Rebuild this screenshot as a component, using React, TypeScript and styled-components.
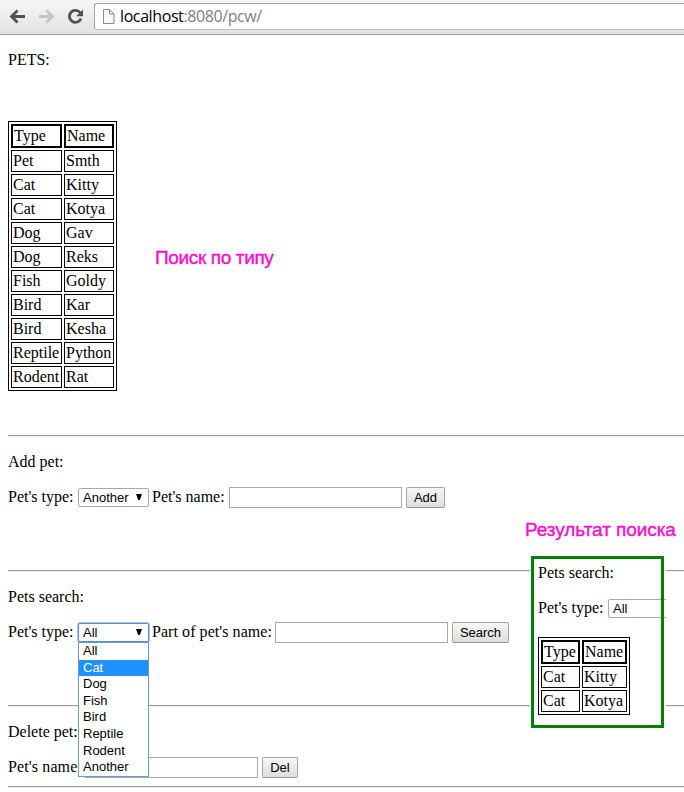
import React from "react";
import styled, { createGlobalStyle, css } from "styled-components";

const GlobalStyle = createGlobalStyle`
  * { box-sizing: border-box; }
  html, body { margin: 0; padding: 0; background: #fff; overflow: hidden; }
  body { font: 16px/18px "Liberation Serif", "Times New Roman", serif; color: #000; }
`;

const Page = styled.div`
  position: relative;
  width: 684px;
  height: 792px;
  overflow: hidden;
`;

const Toolbar = styled.header`
  display: flex;
  height: 35px;
  padding-top: 3px;
  background: linear-gradient(#f6f6f6, #e1e1e1);
  border-bottom: 1px solid #a5a5a5;
`;

const NavIcons = styled.div`
  display: flex;
  width: 94px;
  height: 27px;
  flex: none;
`;

const AddressBar = styled.div`
  display: flex;
  flex: 1;
  height: 27px;
  padding-left: 7px;
  background: #fff;
  border: 1px solid #a6a6a6;
  border-bottom-color: #c0c0c0;
  border-right: 0;
  border-radius: 3px 0 0 3px;
`;

const Url = styled.div`
  margin-left: 5px;
  font: 16px/25px "Open Sans", sans-serif;
  letter-spacing: -0.4px;
  color: #808080;
  white-space: pre;
`;

const Host = styled.span`
  color: #000;
`;

const Content = styled.main`
  padding: 16px 0 0 8px;
`;

const Text = styled.p`
  margin: 0;
  height: 18px;
  white-space: nowrap;
`;

const Table = styled.table<{ $cols: [number, number] }>`
  table-layout: fixed;
  width: ${(p) => p.$cols[0] + p.$cols[1] + 8}px;
  border: 1px solid #000;
  border-collapse: separate;
  border-spacing: 2px;

  th, td {
    padding: 1px;
    text-align: left;
    font-weight: normal;
    white-space: nowrap;
    border: 1px solid #000;
    height: 22px;
  }
  th {
    height: 24px;
    border-width: 2px;
  }
  th:first-child { width: ${(p) => p.$cols[0]}px; }
  th:last-child { width: ${(p) => p.$cols[1]}px; }
`;

const MainTable = styled.div`
  margin: 52px 0 44px;
`;

const Rule = styled.hr`
  height: 2px;
  margin: 0;
  border: 0;
  border-top: 1px solid #999;
  background: #eee;
`;

const Section = styled.section<{ $height: number }>`
  height: ${(p) => p.$height}px;
  padding-top: 16px;
`;

const FormRow = styled.div`
  display: flex;
  align-items: flex-start;
  height: 21px;
  margin-top: 16px;
`;

const Label = styled.label<{ $width: number; $spacing?: number }>`
  flex: none;
  width: ${(p) => p.$width}px;
  padding-top: 1px;
  letter-spacing: ${(p) => p.$spacing ?? 0}px;
  white-space: nowrap;
`;

const controlFont = css`
  font: 13px/15px "Liberation Sans", Arial, sans-serif;
  color: #000;
`;

const SelectBox = styled.div<{ $focused?: boolean }>`
  ${controlFont}
  position: relative;
  display: flex;
  justify-content: space-between;
  flex: none;
  width: 71px;
  height: 19px;
  margin: 1px 3px 0 0;
  padding: 1px 6px 0 4px;
  background: #fff;
  border: 1px solid #a9a9a9;
  border-radius: 2px;
  ${(p) =>
    p.$focused &&
    css`
      border-color: #5b8bd6;
      box-shadow: 0 0 0 1px #a9c4ee;
    `}
`;

const Arrow = styled.svg`
  width: 6px;
  height: 6px;
  margin-top: 4px;
`;

const Menu = styled.ul`
  position: absolute;
  z-index: 2;
  top: 18px;
  left: -1px;
  width: 71px;
  height: 135px;
  margin: 0;
  padding: 0;
  list-style: none;
  background: #fff;
  border: 1px solid #6f97d3;
`;

const Option = styled.li<{ $active?: boolean }>`
  height: 16.6px;
  padding-left: 4px;
  line-height: 16px;
  color: ${(p) => (p.$active ? "#fff" : "#000")};
  background: ${(p) => (p.$active ? "#1e90ff" : "transparent")};
`;

const Field = styled.input`
  flex: none;
  width: 173px;
  height: 21px;
  margin: 0 4px 0 0;
  padding: 1px;
  background: #fff;
  border: 1px solid #a9a9a9;
  outline: 0;
`;

const Button = styled.button<{ $width: number }>`
  ${controlFont}
  flex: none;
  width: ${(p) => p.$width}px;
  height: 21px;
  padding: 0 0 1px;
  background: linear-gradient(#f6f6f6, #dedede);
  border: 1px solid #a6a6a6;
  border-bottom-color: #959595;
  border-radius: 2px;
`;

const Note = styled.div<{ $x: number; $y: number; $spacing: number }>`
  position: absolute;
  left: ${(p) => p.$x}px;
  top: ${(p) => p.$y}px;
  font: 19px/22px "Liberation Sans", Arial, sans-serif;
  letter-spacing: ${(p) => p.$spacing}px;
  -webkit-text-stroke: 0.4px #fb0dcb;
  color: #fb0dcb;
  white-space: nowrap;
`;

const ResultCard = styled.aside`
  position: absolute;
  left: 530px;
  top: 555px;
  width: 136px;
  height: 174px;
  padding: 9px 0 0 8px;
  background: #fff;
  overflow: hidden;
`;

const Frame = styled.div`
  position: absolute;
  z-index: 3;
  left: 1px;
  top: 1px;
  width: 133px;
  height: 172px;
  border: 3px solid #008000;
`;

const ResultTable = styled.div`
  margin-top: 18px;
`;

type Pet = [string, string];

const pets: Pet[] = [
  ["Pet", "Smth"], ["Cat", "Kitty"], ["Cat", "Kotya"], ["Dog", "Gav"], ["Dog", "Reks"],
  ["Fish", "Goldy"], ["Bird", "Kar"], ["Bird", "Kesha"], ["Reptile", "Python"], ["Rodent", "Rat"],
];
const types = ["All", "Cat", "Dog", "Fish", "Bird", "Reptile", "Rodent", "Another"];

function PetTable({ rows, cols }: { rows: Pet[]; cols: [number, number] }) {
  return (
    <Table $cols={cols}>
      <thead>
        <tr><th>Type</th><th>Name</th></tr>
      </thead>
      <tbody>
        {rows.map(([type, name]) => (
          <tr key={name}><td>{type}</td><td>{name}</td></tr>
        ))}
      </tbody>
    </Table>
  );
}

function Select({ value, open }: { value: string; open?: boolean }) {
  return (
    <SelectBox $focused={open}>
      {value}
      <Arrow viewBox="0 0 6 6"><path d="M0 0h6L3.800 6H2.200z" /></Arrow>
      {open && (
        <Menu>
          {types.map((t) => <Option key={t} $active={t === "Cat"}>{t}</Option>)}
        </Menu>
      )}
    </SelectBox>
  );
}

export default function App() {
  return (
    <Page>
      <GlobalStyle />
      <Toolbar>
        <NavIcons>
          <svg width="94" height="27" viewBox="0 3 94 27" fill="none" strokeWidth="2.8">
            <path d="M25 16.5H12M17.5 10.5l-6 6 6 6" stroke="#505050" />
            <path d="M39 16.5h13M46.500 10.500l6 6-6 6" stroke="#c4c4c4" />
            <path d="M80.300 12.800A6 6 0 1 0 81 18.500" stroke="#505050" />
            <path d="M83 9.500v6.800h-6.800z" fill="#505050" />
          </svg>
        </NavIcons>
        <AddressBar>
          <svg width="13" height="25" viewBox="101 4 13 25" fill="#f7f7f7" stroke="#8b8b8b">
            <path d="M102.500 9.500h6l4.500 4.500v9.500h-10.500zM108.500 9.500v4.500h4.500" />
          </svg>
          <Url><Host>localhost</Host>:8080/pcw/</Url>
        </AddressBar>
      </Toolbar>
      <Content>
        <Text>PETS:</Text>
        <MainTable><PetTable rows={pets} cols={[51, 50]} /></MainTable>
        <Rule />
        <Section $height={133}>
          <Text>Add pet:</Text>
          <FormRow>
            <Label $width={70}>Pet's type:</Label>
            <Select value="Another" />
            <Label $width={77}>Pet's name:</Label>
            <Field />
            <Button $width={39}>Add</Button>
          </FormRow>
        </Section>
        <Rule />
        <Section $height={133}>
          <Text>Pets search:</Text>
          <FormRow>
            <Label $width={70}>Pet's type:</Label>
            <Select value="All" open />
            <Label $width={123} $spacing={0.06}>Part of pet's name:</Label>
            <Field />
            <Button $width={57}>Search</Button>
          </FormRow>
        </Section>
        <Rule />
        <Section $height={79}>
          <Text>Delete pet:</Text>
          <FormRow>
            <Label $width={77} $spacing={0.12}>Pet's name:</Label>
            <Field />
            <Button $width={36}>Del</Button>
          </FormRow>
        </Section>
        <Rule />
      </Content>
      <Note $x={155} $y={247} $spacing={-0.36}>Поиск по типу</Note>
      <Note $x={525} $y={519} $spacing={-0.07}>Результат поиска</Note>
      <ResultCard>
        <Frame />
        <Text>Pets search:</Text>
        <FormRow>
          <Label $width={70}>Pet's type:</Label>
          <Select value="All" />
        </FormRow>
        <ResultTable><PetTable rows={pets.slice(1, 3)} cols={[39, 45]} /></ResultTable>
      </ResultCard>
    </Page>
  );
}
